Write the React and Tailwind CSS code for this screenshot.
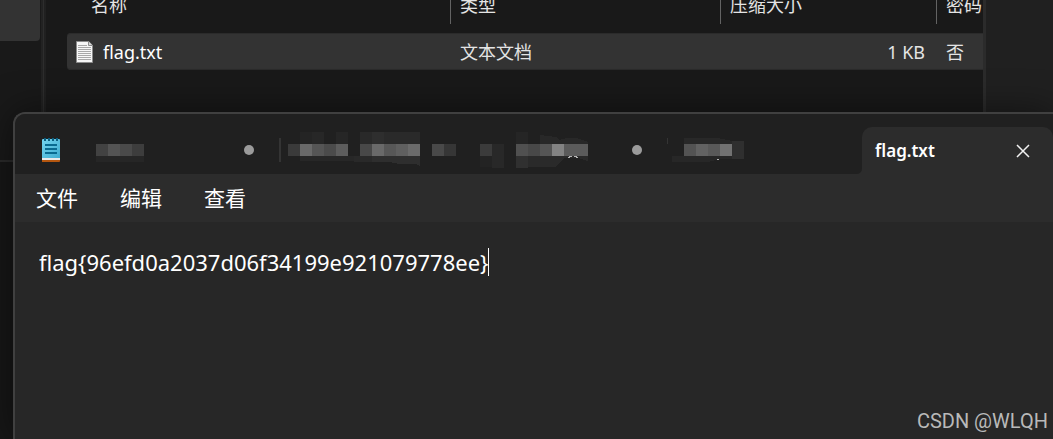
const columns = [
  { label: '名称', width: '', pad: 'pl-6' },
  { label: '类型', width: 'w-[270px]', pad: 'border-l border-[#636363] pl-[9px]' },
  { label: '压缩大小', width: 'w-[216px]', pad: 'border-l border-[#636363] pl-[9px]' },
  { label: '密码', width: 'w-[47px]', pad: 'border-l border-[#636363] pl-[9px]' },
];

const files = [{ name: 'flag.txt', type: '文本文档', size: '1 KB', locked: '否' }];

const menus = ['文件', '编辑', '查看'];

// Hidden tab titles, [x, y, width, height, fill]
const hiddenTabs = [
  {
    name: 'Hidden tab 1',
    modified: true,
    cells: [
      [10, 12, 12, 12, '#424242'],
      [22, 12, 12, 12, '#545454'],
      [34, 12, 12, 12, '#4a4a4a'],
      [46, 12, 12, 12, '#3d3d3d'],
      [10, 24, 48, 6, '#262626'],
    ],
  },
  {
    name: 'Hidden tab 2',
    divider: 'h-6 w-0.5',
    cells: [
      [20, 0, 12, 12, '#242424'],
      [32, 0, 12, 12, '#272727'],
      [56, 0, 12, 12, '#262626'],
      [80, 0, 12, 12, '#292929'],
      [92, 0, 12, 12, '#2e2e2e'],
      [104, 0, 36, 12, '#2a2a2a'],
      [8, 12, 12, 12, '#3a3a3a'],
      [20, 12, 12, 12, '#696969'],
      [32, 12, 12, 12, '#555555'],
      [44, 12, 12, 12, '#4b4b4b'],
      [56, 12, 12, 12, '#5d5d5d'],
      [80, 12, 12, 12, '#484848'],
      [92, 12, 12, 12, '#696969'],
      [104, 12, 12, 12, '#575757'],
      [116, 12, 12, 12, '#5f5f5f'],
      [128, 12, 12, 12, '#6b6b6b'],
      [152, 12, 12, 12, '#494949'],
      [164, 12, 12, 12, '#363636'],
      [20, 24, 54, 5, '#272727'],
      [74, 24, 18, 6, '#292929'],
    ],
    smudges: [['M92 24h48v10l-4-2h-17l-10-2H92z', '#2e2e2e']],
  },
  {
    name: 'Hidden tab 3',
    modified: true,
    cells: [
      [42, 0, 12, 12, '#252525'],
      [6, 12, 12, 12, '#3b3b3b'],
      [18, 12, 12, 24, '#282828'],
      [42, 12, 12, 12, '#505050'],
      [54, 12, 12, 12, '#484848'],
      [66, 12, 12, 12, '#555555'],
      [78, 12, 12, 12, '#838383'],
      [90, 12, 24, 12, '#5b5b5b'],
      [6, 24, 12, 11, '#232323'],
      [42, 24, 12, 12, '#303030'],
    ],
    smudges: [
      ['M66 3l16 2 3 3 8-2h10l11 4v2H66z', '#282828'],
      ['M54 24h60v5l-10-3H90l-6 7-3 2H54z', '#2a2a2a'],
      ['M95 24h3v1h-3zM94 25h2v1h-2zM100 24h3v1h-3zM102 25h2v1h-2z', '#b5b5b5'],
    ],
  },
  {
    name: 'Hidden tab 4',
    divider: 'h-1.5 w-px',
    cells: [
      [16, 12, 12, 12, '#535353'],
      [28, 12, 12, 12, '#626262'],
      [40, 12, 12, 12, '#595959'],
      [52, 12, 12, 12, '#727272'],
      [64, 9, 12, 18, '#2f2f2f'],
    ],
    smudges: [
      ['M16 6h34l14 3v3H16z', '#282828'],
      ['M4 24h60v3H52l-12 3H4z', '#272727'],
      ['M49 27h2v1h-2z', '#b5b5b5'],
    ],
  },
];

const FileIcon = () => (
  <svg className="h-[22px] w-[17px] shrink-0" viewBox="0 0 17 22" aria-hidden="true">
    <path d="M.5.5h12.2l3.8 3.8v17.2H.5z" fill="#f7f7f7" stroke="#8c8c8c" />
    <path d="M12.5.5v4h4" fill="#d8d8d8" stroke="#8c8c8c" />
    <path
      d="M2 4.5h9M2 6.5h13M2 8.5h13M2 10.5h13M2 12.5h13M2 14.5h13M2 16.5h13M2 18.5h13"
      stroke="#a8a8a8"
    />
  </svg>
);

const NotepadIcon = () => (
  <svg className="h-6 w-5 shrink-0" viewBox="0 0 20 24" aria-hidden="true">
    <defs>
      <linearGradient id="pad" x1="0" y1="0" x2="1" y2="1">
        <stop offset="0" stopColor="#73d5f0" />
        <stop offset="1" stopColor="#3fabcf" />
      </linearGradient>
    </defs>
    <path d="M1 20h18v3q0 1-1 1H1z" fill="#b4560f" />
    <path d="M1 19h18v3H1z" fill="#e9e9e9" />
    <path d="M1 2q0-1 1-1h16q1 0 1 1v18H1z" fill="url(#pad)" />
    <path d="M4 0v3M8 0v3M12 0v3M16 0v3" stroke="#0b5f80" strokeWidth="2" />
    <path d="M4 7h12M4 11h12M4 15h12" stroke="#096a90" strokeWidth="2" />
  </svg>
);

const CloseIcon = () => (
  <svg className="size-[14px]" viewBox="0 0 14 14" aria-hidden="true">
    <path d="M1 1l12 12M13 1L1 13" stroke="#f2f2f2" strokeWidth="1.5" fill="none" />
  </svg>
);

const HiddenTab = ({ tab }) => (
  <button
    type="button"
    role="tab"
    aria-selected="false"
    aria-label={tab.name}
    className="relative flex h-12 min-w-0 flex-1 items-center"
  >
    {tab.divider && (
      <span className={`absolute top-3 -left-px bg-[#343434] ${tab.divider}`} />
    )}
    <svg className="h-9 w-44 shrink-0" viewBox="0 0 176 36" shapeRendering="crispEdges" aria-hidden="true">
      {tab.cells.map(([x, y, width, height, fill]) => (
        <rect key={`${x}-${y}`} x={x} y={y} width={width} height={height} fill={fill} />
      ))}
      {tab.smudges?.map(([d, fill]) => (
        <path key={d} d={d} fill={fill} />
      ))}
    </svg>
    {tab.modified && (
      <span className="absolute right-[26px] size-[10px] rounded-full bg-[#9b9b9b]" />
    )}
  </button>
);

const ArchiveWindow = () => (
  <div className="flex h-full text-[18px] text-[#e4e4e4]">
    <aside className="flex w-10 shrink-0 flex-col">
      <div className="h-[41px] rounded-br-sm bg-[#333333]" />
      <div className="h-[121px] border-b-2 border-[#2b2b2b]" />
      <div className="flex-1 bg-[#171717]" />
    </aside>
    <div className="ml-px w-[5px] shrink-0 border-x-2 border-l-[#222222] border-r-[#202020] bg-[#2d2d2d]" />
    <main className="-mt-4 min-w-0 flex-1 pl-[21px]">
      <table className="w-full table-fixed border-separate border-spacing-0 text-left">
        <thead>
          <tr>
            {columns.map((column) => (
              <th key={column.label} className={`p-0 pb-[9px] font-normal ${column.width}`}>
                <div className={`h-10 overflow-hidden leading-[42px] whitespace-nowrap ${column.pad}`}>
                  {column.label}
                </div>
              </th>
            ))}
          </tr>
        </thead>
        <tbody>
          {files.map((file) => (
            <tr key={file.name} className="h-[37px] bg-[#333333]">
              <td className="rounded-l-sm border-y border-[#2b2b2b] p-0 pl-[9px]">
                <div className="flex items-center gap-[10px] text-white">
                  <FileIcon />
                  <span className="pt-0.5">{file.name}</span>
                </div>
              </td>
              <td className="border-y border-[#2b2b2b] p-0 pt-0.5 pl-[10px]">{file.type}</td>
              <td className="border-y border-[#2b2b2b] p-0 pt-0.5 pr-[11px] text-right">{file.size}</td>
              <td className="border-y border-[#2b2b2b] p-0 pt-0.5 pl-[10px]">{file.locked}</td>
            </tr>
          ))}
        </tbody>
      </table>
    </main>
    <aside className="w-[70px] shrink-0 border-l-[3px] border-[#2b2b2b] bg-[#202020]" />
  </div>
);

const NotepadWindow = () => (
  <section className="absolute top-28 right-0 bottom-0 left-[13px] flex flex-col overflow-hidden rounded-tl-xl border-t-2 border-l-2 border-[#404040] bg-[#272727] text-white shadow-[0_0_36px_rgba(0,0,0,0.5)]">
    <div className="flex h-[60px] shrink-0 items-end bg-[#202020] pl-[26px]">
      <div className="mr-[25px] flex h-12 items-center">
        <NotepadIcon />
      </div>
      <div role="tablist" className="flex min-w-0 flex-1 items-end">
        {hiddenTabs.map((tab) => (
          <HiddenTab key={tab.name} tab={tab} />
        ))}
        <div className="relative flex h-[47px] w-[191px] shrink-0 items-center justify-between rounded-t-[10px] bg-[#2c2c2c] pr-[23px] pl-[13px]">
          <svg className="absolute bottom-0 -left-1.5 size-1.5" viewBox="0 0 6 6" aria-hidden="true">
            <path d="M6 0v6H0Q6 6 6 0z" fill="#2c2c2c" />
          </svg>
          <button type="button" role="tab" aria-selected="true" className="text-[17px] font-semibold">
            flag.txt
          </button>
          <button type="button" aria-label="Close tab">
            <CloseIcon />
          </button>
        </div>
      </div>
    </div>
    <nav className="flex h-12 shrink-0 items-center gap-[42px] bg-[#2c2c2c] pt-0.5 pl-[21px] text-[21px]">
      {menus.map((menu) => (
        <button key={menu} type="button">
          {menu}
        </button>
      ))}
    </nav>
    <div className="flex flex-1 items-start pt-[26px] pl-6">
      <textarea
        aria-label="Document text"
        rows={1}
        spellCheck={false}
        defaultValue="flag{96efd0a2037d06f34199e921079778ee}"
        className="field-sizing-content h-7 resize-none overflow-hidden bg-transparent text-[22px] leading-7 whitespace-pre outline-none"
      />
      <span className="h-7 w-px bg-white" />
    </div>
  </section>
);

const App = () => (
  <div className="relative h-screen overflow-hidden bg-[#191919] font-['Noto_Sans','Noto_Sans_CJK_SC',sans-serif]">
    <ArchiveWindow />
    <NotepadWindow />
    <p className="absolute right-[5px] bottom-1 font-['Roboto',sans-serif] text-[20px] leading-7 text-[#b9b9b9]">
      CSDN @WLQH
    </p>
  </div>
);

export default App;
